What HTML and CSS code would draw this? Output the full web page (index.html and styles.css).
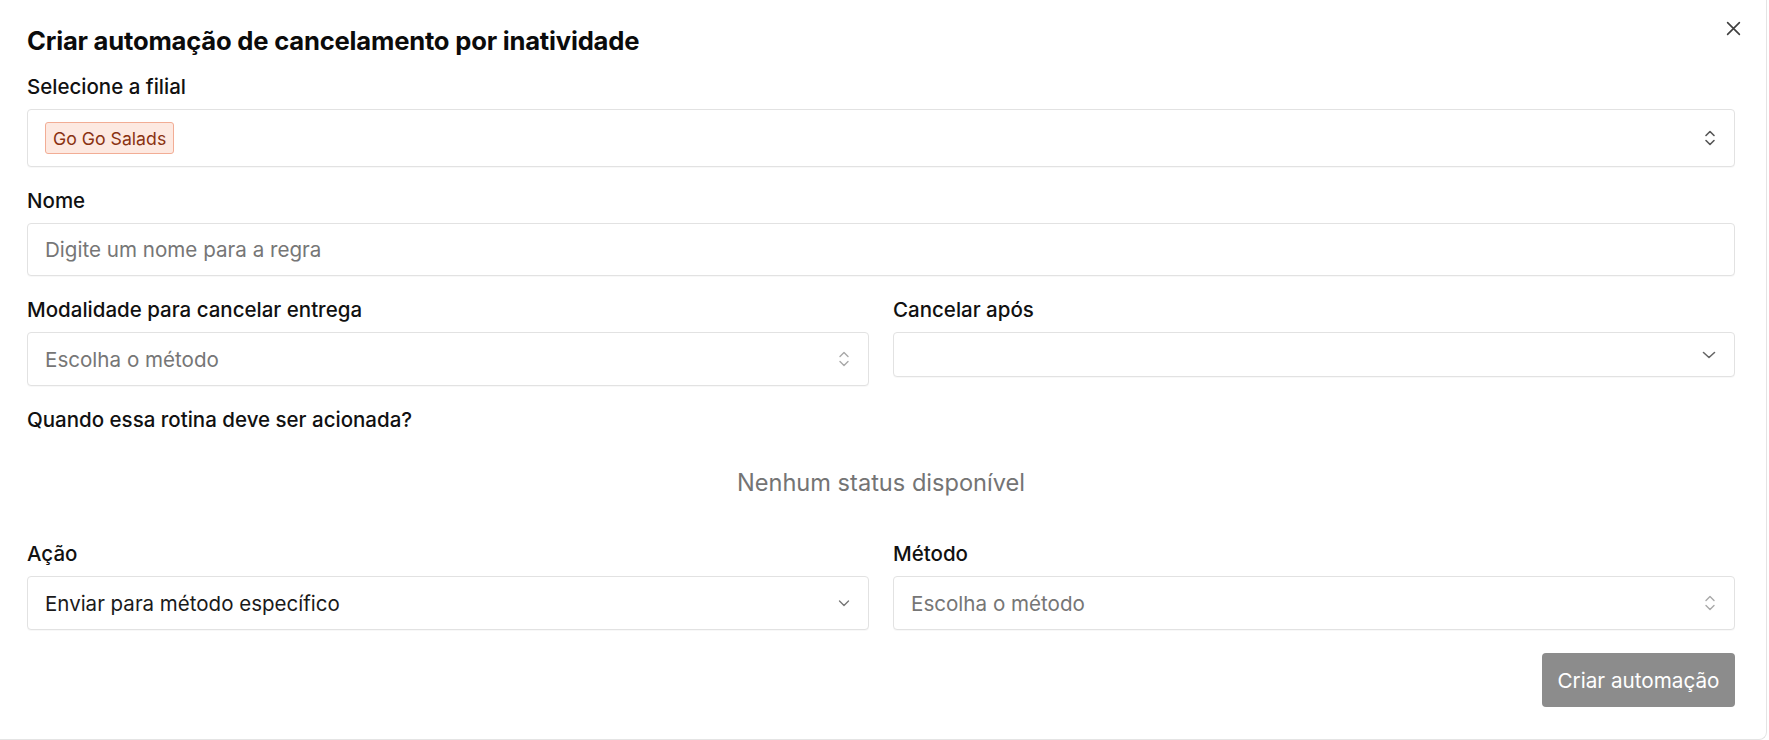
FILE: index.html
```html
<!DOCTYPE html>
<html lang="pt-BR">
<head>
<meta charset="utf-8">
<title>Criar automação</title>
<link rel="stylesheet" href="styles.css">
</head>
<body>
<div class="modal">
  <button class="close" aria-label="Fechar">
    <svg width="15" height="15" viewBox="0 0 14 14"><path d="M1.5 1.5l11 11M12.5 1.5l-11 11" stroke="#3f3f3f" stroke-width="1.5" stroke-linecap="round" fill="none"/></svg>
  </button>
  <h1 class="title">Criar automação de cancelamento por inatividade</h1>

  <div class="field field-first">
    <div class="label">Selecione a filial</div>
    <div class="control control-tall">
      <span class="tag">Go Go Salads</span>
      <svg class="icon" width="14" height="20" viewBox="0 0 14 20"><path d="M3 7.5l4-4 4 4M3 12.5l4 4 4-4" stroke="#555" stroke-width="1.6" fill="none" stroke-linecap="round" stroke-linejoin="round"/></svg>
    </div>
  </div>

  <div class="field">
    <div class="label">Nome</div>
    <div class="control control-input"><span class="placeholder">Digite um nome para a regra</span></div>
  </div>

  <div class="row">
    <div class="field">
      <div class="label">Modalidade para cancelar entrega</div>
      <div class="control control-select">
        <span class="placeholder">Escolha o método</span>
        <svg class="icon" width="14" height="20" viewBox="0 0 14 20"><path d="M3 7.5l4-4 4 4M3 12.5l4 4 4-4" stroke="#a8a8a8" stroke-width="1.4" fill="none" stroke-linecap="round" stroke-linejoin="round"/></svg>
      </div>
    </div>
    <div class="field field-top">
      <div class="label">Cancelar após</div>
      <div class="control control-short">
        <span></span>
        <svg class="icon" width="16" height="16" viewBox="0 0 16 16"><path d="M2.5 5.5l5.5 5 5.5-5" stroke="#666" stroke-width="1.6" fill="none" stroke-linecap="round" stroke-linejoin="round"/></svg>
      </div>
    </div>
  </div>

  <div class="field field-status">
    <div class="label">Quando essa rotina deve ser acionada?</div>
    <div class="empty">Nenhum status disponível</div>
  </div>

  <div class="row">
    <div class="field">
      <div class="label">Ação</div>
      <div class="control control-select">
        <span class="value">Enviar para método específico</span>
        <svg class="icon" width="14" height="14" viewBox="0 0 14 14"><path d="M2.5 5l4.5 4.5 4.5-4.5" stroke="#777" stroke-width="1.4" fill="none" stroke-linecap="round" stroke-linejoin="round"/></svg>
      </div>
    </div>
    <div class="field">
      <div class="label">Método</div>
      <div class="control control-select">
        <span class="placeholder">Escolha o método</span>
        <svg class="icon" width="14" height="20" viewBox="0 0 14 20"><path d="M3 7.5l4-4 4 4M3 12.5l4 4 4-4" stroke="#a8a8a8" stroke-width="1.4" fill="none" stroke-linecap="round" stroke-linejoin="round"/></svg>
      </div>
    </div>
  </div>

  <div class="footer">
    <button class="submit">Criar automação</button>
  </div>
</div>
</body>
</html>
```

FILE: styles.css
```css
* { box-sizing: border-box; }

html, body {
  margin: 0;
  padding: 0;
  background: #ffffff;
}

body {
  font-family: Inter, "Noto Sans", "Liberation Sans", sans-serif;
  color: #111111;
  width: 1769px;
  height: 740px;
  overflow: hidden;
}

.modal {
  position: relative;
  width: 1767px;
  height: 740px;
  padding: 27px 31px 0 27px;
  background: #ffffff;
  border-right: 1px solid #e4e4e4;
  border-bottom: 1px solid #e4e4e4;
  border-bottom-right-radius: 8px;
  display: flex;
  flex-direction: column;
}

.close {
  position: absolute;
  top: 20px;
  right: 24px;
  width: 17px;
  height: 17px;
  padding: 0;
  margin: 0;
  border: 0;
  background: none;
  display: flex;
  align-items: center;
  justify-content: center;
}

.title {
  margin: 0;
  font-size: 25.6px;
  line-height: 28px;
  font-weight: 700;
  letter-spacing: -0.2px;
  color: #0b0b0b;
}

.field {
  display: flex;
  flex-direction: column;
  margin-top: 22px;
  min-width: 0;
}

.field-first { margin-top: 20px; }

.label {
  font-size: 20.5px;
  line-height: 24px;
  font-weight: 500;
  color: #111111;
  margin-bottom: 10px;
}

.control {
  display: flex;
  align-items: center;
  justify-content: space-between;
  border: 1px solid #e2e2e2;
  border-radius: 4px;
  box-shadow: 0 1px 1px rgba(0, 0, 0, 0.03);
  padding: 0 17px 0 17px;
  background: #ffffff;
}

.control-tall { height: 58px; }
.control-input { height: 53px; }
.control-select { height: 54px; }
.control-short { height: 45px; }

.placeholder {
  font-size: 20.6px;
  color: #767676;
}

.value {
  font-size: 20.5px;
  color: #1a1a1a;
}

.tag {
  display: inline-flex;
  align-items: center;
  height: 32px;
  padding: 0 7px;
  font-size: 17.7px;
  color: #8a3212;
  background: #fde9e1;
  border: 1px solid #f2ad95;
  border-radius: 3px;
}

.icon { flex: none; }

.row {
  display: grid;
  grid-template-columns: 1fr 1fr;
  column-gap: 24px;
}

.row > .field { margin-top: 22px; }

.field-top { align-self: start; }

.field-status { margin-top: 22px; }

.empty {
  padding: 29px 0 25px;
  text-align: center;
  font-size: 23.6px;
  line-height: 24px;
  color: #747474;
}

.footer {
  display: flex;
  justify-content: flex-end;
  margin-top: 23px;
}

.submit {
  height: 54px;
  width: 193px;
  border: 0;
  border-radius: 4px;
  background: #8c8c8c;
  color: #ffffff;
  font-family: inherit;
  font-size: 20.7px;
}
```
